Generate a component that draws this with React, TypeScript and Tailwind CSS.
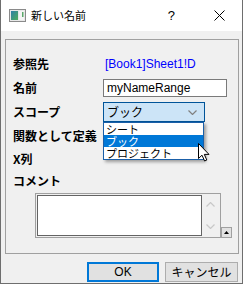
import React from "react";

// 「新しい名前」ダイアログ — スコープのドロップダウンが開いた状態

const jp = "font-['Noto_Sans_CJK_JP','Noto_Sans',sans-serif]";
const latin = "font-['Liberation_Sans','Noto_Sans_CJK_JP',sans-serif]";

function AppIcon() {
  return (
    <svg width="17" height="13" viewBox="0 0 17 13" aria-hidden="true">
      <defs>
        <linearGradient id="g" x1="0" y1="0" x2="1" y2="1">
          <stop offset="0" stopColor="#2f7fa8" />
          <stop offset="1" stopColor="#4fae5a" />
        </linearGradient>
      </defs>
      <rect x="0.5" y="0.5" width="16" height="12" fill="#e8e8e8" stroke="#8a8a8a" />
      <rect x="2" y="2" width="7" height="9" fill="url(#g)" />
      <rect x="10" y="2" width="5" height="9" fill="#f4f4f4" />
      <rect x="13" y="3" width="1.5" height="5" fill="#5aa86a" />
    </svg>
  );
}

function Cursor() {
  return (
    <svg width="13" height="19" viewBox="0 0 13 19" aria-hidden="true">
      <path
        d="M0.5 0.5 L0.5 15.5 L4 12.2 L6.6 18 L8.8 17 L6.3 11.4 L11 11.4 Z"
        fill="#fff"
        stroke="#000"
        strokeWidth="1"
        strokeLinejoin="miter"
      />
    </svg>
  );
}

function Chevron({ up, color }: { up?: boolean; color: string }) {
  return (
    <svg width="9" height="5" viewBox="0 0 9 5" aria-hidden="true">
      <polyline
        points={up ? "0.5,4.5 4.5,0.5 8.5,4.5" : "0.5,0.5 4.5,4.5 8.5,0.5"}
        fill="none"
        stroke={color}
        strokeWidth="1.2"
      />
    </svg>
  );
}

export default function App() {
  return (
    <div className="h-[285px] w-[243px] bg-white">
      <div className="flex h-[284px] w-[243px] flex-col border-x border-b border-[#6e6e6e] bg-[#f0f0f0] text-black">
        {/* タイトルバー */}
        <div className="flex h-[31px] items-center bg-white pl-[8px]">
          <AppIcon />
          <span className={`${jp} ml-[5px] text-[11px] leading-none`}>新しい名前</span>
          <span className={`${latin} ml-auto mr-[39px] text-[13px] leading-none`}>?</span>
          <svg width="11" height="11" viewBox="0 0 11 11" className="mr-[17px]" aria-hidden="true">
            <path d="M0.5 0.5 L10.5 10.5 M10.5 0.5 L0.5 10.5" stroke="#000" strokeWidth="1" />
          </svg>
        </div>

        {/* グループボックス */}
        <div className="ml-[4px] mr-[3px] mt-[8px] border border-[#a0a0a0] pb-[15px] pl-[7px] pt-[11px]">
          <div className={`${jp} text-[12px] font-bold leading-none`}>
            <div className="flex h-[25px] items-center">
              <span className="w-[90px]">参照先</span>
              <span className={`${latin} pl-[2px] font-normal text-[#0000ff]`}>[Book1]Sheet1!D</span>
            </div>
            <div className="flex h-[24px] items-center">
              <span className="w-[90px]">名前</span>
              <div className="flex h-[18px] w-[124px] items-center border border-[#7a7a7a] bg-white pl-[3px]">
                <span className={`${latin} font-normal`}>myNameRange</span>
              </div>
            </div>
            <div className="flex h-[24px] items-center">
              <span className="w-[90px]">スコープ</span>
              <div className="relative z-10">
                <div className="flex h-[20px] w-[102px] items-center border border-[#005499] bg-[#cce4f7] pl-[3px] pr-[7px]">
                  <span className="font-normal">ブック</span>
                  <span className="ml-auto">
                    <Chevron color="#808080" />
                  </span>
                </div>
                <div className="absolute left-0 top-full w-[101px] border border-[#1a5fa8] bg-white font-normal shadow-[2px_2px_3px_rgba(0,0,0,0.35)]">
                  <div className="flex h-[12px] items-center pl-[2px] text-[11px]">シート</div>
                  <div className="flex h-[12px] items-center bg-[#0078d7] pl-[2px] text-[11px] text-white">ブック</div>
                  <div className="flex h-[12px] items-center pl-[2px] text-[11px]">プロジェクト</div>
                </div>
                <div className="absolute left-[95px] top-[41px]">
                  <Cursor />
                </div>
              </div>
            </div>
            <div className="flex h-[23px] items-center">
              <span className="w-[90px]">関数として定義</span>
            </div>
            <div className="flex h-[23px] items-center">
              <span className="w-[90px]">X列</span>
            </div>
            <div className="flex h-[22px] items-center">
              <span className="w-[90px]">コメント</span>
            </div>
          </div>

          {/* コメント欄 */}
          <div className="ml-[22px] mt-[1px] flex items-end">
            <div className="flex h-[45px] w-[186px] border border-[#a0a0a0] bg-[#f0f0f0] p-px">
              <div className="h-full w-[165px] border border-[#646464] bg-white" />
              <div className="flex flex-1 flex-col items-center justify-between py-[7px]">
                <Chevron up color="#c8c8c8" />
                <Chevron color="#c8c8c8" />
              </div>
            </div>
            <div className="flex h-[11px] w-[11px] items-center justify-center border border-[#a0a0a0] bg-[#e1e1e1]">
              <svg width="5" height="3" viewBox="0 0 5 3" aria-hidden="true">
                <path d="M0 3 L2.5 0 L5 3 Z" fill="#000" />
              </svg>
            </div>
          </div>
        </div>

        {/* ボタン */}
        <div className={`${jp} mt-[8px] flex justify-end gap-[6px] pr-[4px] text-[12px] leading-none`}>
          <button
            type="button"
            className="flex h-[20px] w-[72px] items-center justify-center border-2 border-[#0078d7] bg-[#e1e1e1]"
          >
            <span className={latin}>OK</span>
          </button>
          <button
            type="button"
            className="flex h-[20px] w-[73px] items-center justify-center border border-[#adadad] bg-[#e1e1e1]"
          >
            キャンセル
          </button>
        </div>
      </div>
    </div>
  );
}
